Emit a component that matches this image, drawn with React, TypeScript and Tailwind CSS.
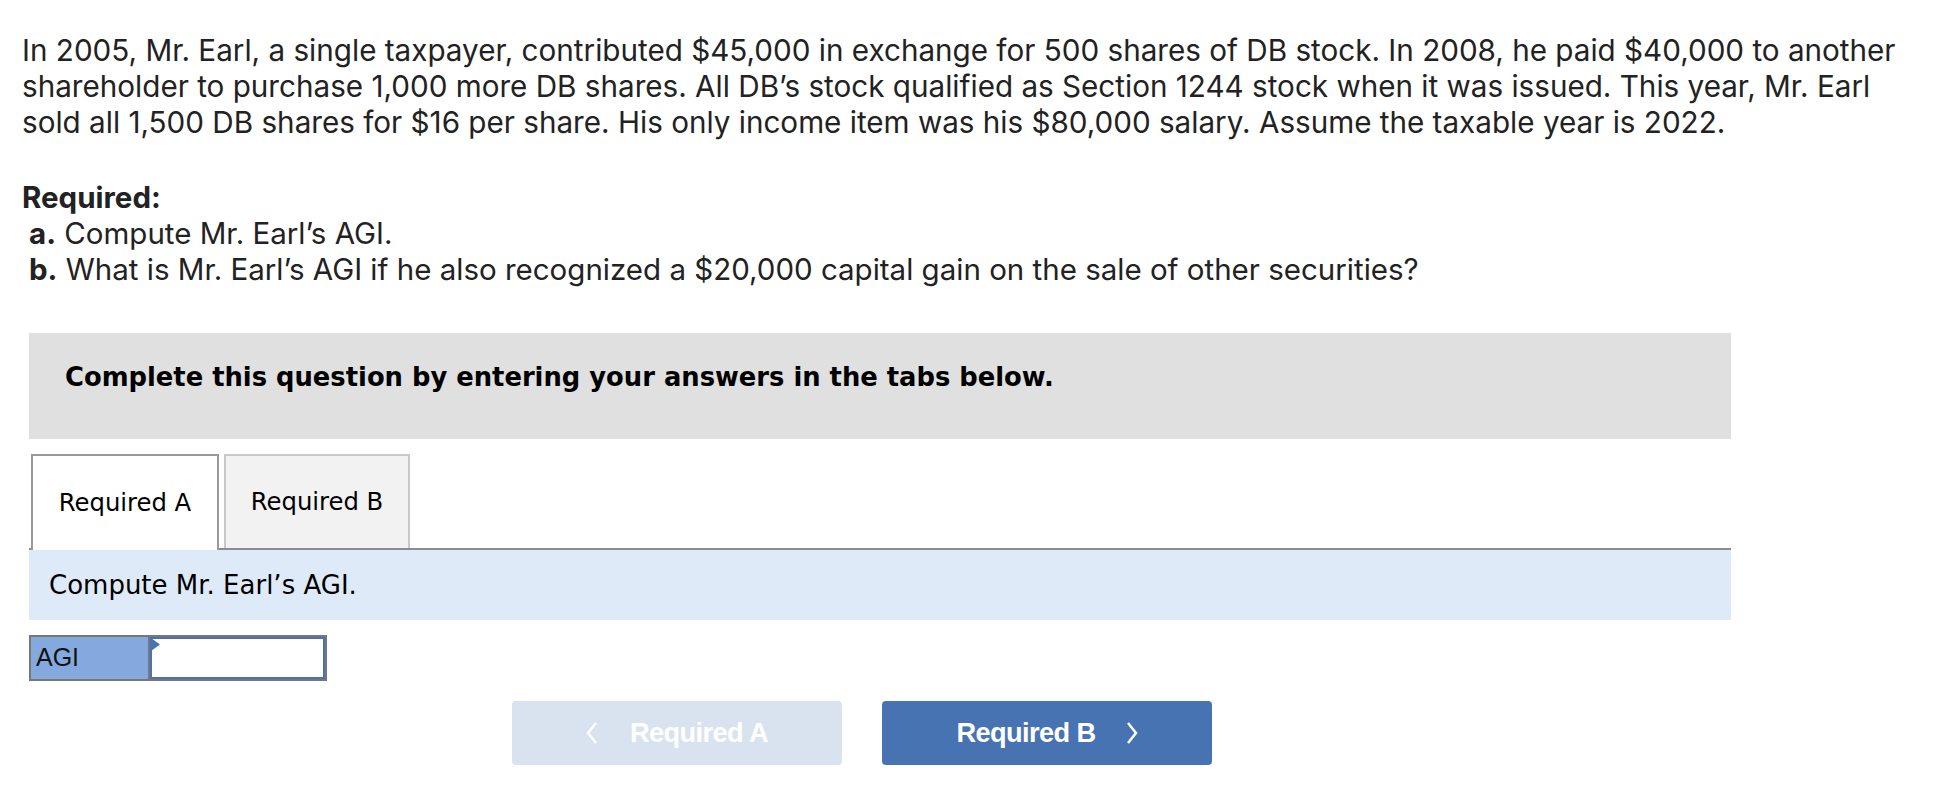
export default function App() {
  return (
    <div className="w-[1954px] min-h-[794px] bg-white pl-[22px] pt-[32px] text-[#222]">
      <p className="font-['Inter',sans-serif] text-[29.65px] leading-[36px]">
        In 2005, Mr. Earl, a single taxpayer, contributed $45,000 in exchange for 500 shares of DB stock. In 2008, he paid $40,000 to another
        <br />
        shareholder to purchase 1,000 more DB shares. All DB’s stock qualified as Section 1244 stock when it was issued. This year, Mr. Earl
        <br />
        sold all 1,500 DB shares for $16 per share. His only income item was his $80,000 salary. Assume the taxable year is 2022.
      </p>

      <div className="mt-[39px] font-['Inter',sans-serif] text-[29.5px] leading-[36px]">
        <div className="font-bold">Required:</div>
        <div className="pl-[7px]">
          <span className="font-bold">a.</span> Compute Mr. Earl’s AGI.
        </div>
        <div className="pl-[7px]">
          <span className="font-bold">b.</span> What is Mr. Earl’s AGI if he also recognized a $20,000 capital gain on the sale of other securities?
        </div>
      </div>

      <div className="ml-[7px] w-[1702px]">
        {/* Instruction banner */}
        <div className="mt-[46px] h-[106px] bg-[#e0e0e0] pl-[36px] pt-[29px]">
          <div className="font-['DejaVu_Sans',sans-serif] text-[25.8px] font-bold leading-[30px] text-black">
            Complete this question by entering your answers in the tabs below.
          </div>
        </div>

        {/* Tabs */}
        <div className="mt-[15px] flex items-end gap-[5px] border-b-2 border-[#8c8c8c] pl-[2px]">
          <div className="-mb-[2px] flex h-[96px] w-[188px] items-center justify-center border-2 border-b-0 border-[#999] bg-white font-['DejaVu_Sans',sans-serif] text-[24.3px] text-black">
            Required A
          </div>
          <div className="flex h-[94px] w-[186px] items-center justify-center border-2 border-b-0 border-[#c8c8c8] bg-[#f2f2f2] font-['DejaVu_Sans',sans-serif] text-[24.3px] text-black">
            Required B
          </div>
        </div>

        <div className="flex h-[70px] items-center bg-[#deeaf7] pl-[20px] font-['DejaVu_Sans',sans-serif] text-[26px] text-black">
          Compute Mr. Earl’s AGI.
        </div>

        {/* Answer row */}
        <div className="mt-[15px] flex h-[46px] w-[298px] border-2 border-[#777]">
          <div className="flex w-[119px] items-center border-r-2 border-[#777] bg-[#84a9de] pl-[5px] font-['Liberation_Sans',sans-serif] text-[25px] text-[#111]">
            AGI
          </div>
          <div className="relative flex-1 border-2 border-[#4a72b2] bg-white">
            <svg className="absolute -left-[1px] -top-[1px]" width="9" height="13" viewBox="0 0 9 13">
              <polygon points="0,0 9,6.5 0,13" fill="#4a72b2" />
            </svg>
          </div>
        </div>

        {/* Navigation */}
        <div className="ml-[483px] mt-[20px] flex gap-[40px] font-['Liberation_Sans',sans-serif] text-[27.2px] font-bold text-white">
          <div className="flex h-[64px] w-[330px] items-center justify-center gap-[32px] rounded-[4px] bg-[#d9e3f0]">
            <svg width="12" height="22" viewBox="0 0 12 22">
              <polyline points="10,1 2,11 10,21" fill="none" stroke="white" strokeWidth="2.5" />
            </svg>
            <span className="tracking-[-0.6px]">Required A</span>
          </div>
          <div className="flex h-[64px] w-[330px] items-center justify-center gap-[30px] rounded-[4px] bg-[#4873b3]">
            <span className="tracking-[-0.6px]">Required B</span>
            <svg width="12" height="22" viewBox="0 0 12 22">
              <polyline points="2,1 10,11 2,21" fill="none" stroke="white" strokeWidth="2.5" />
            </svg>
          </div>
        </div>
      </div>
    </div>
  );
}
